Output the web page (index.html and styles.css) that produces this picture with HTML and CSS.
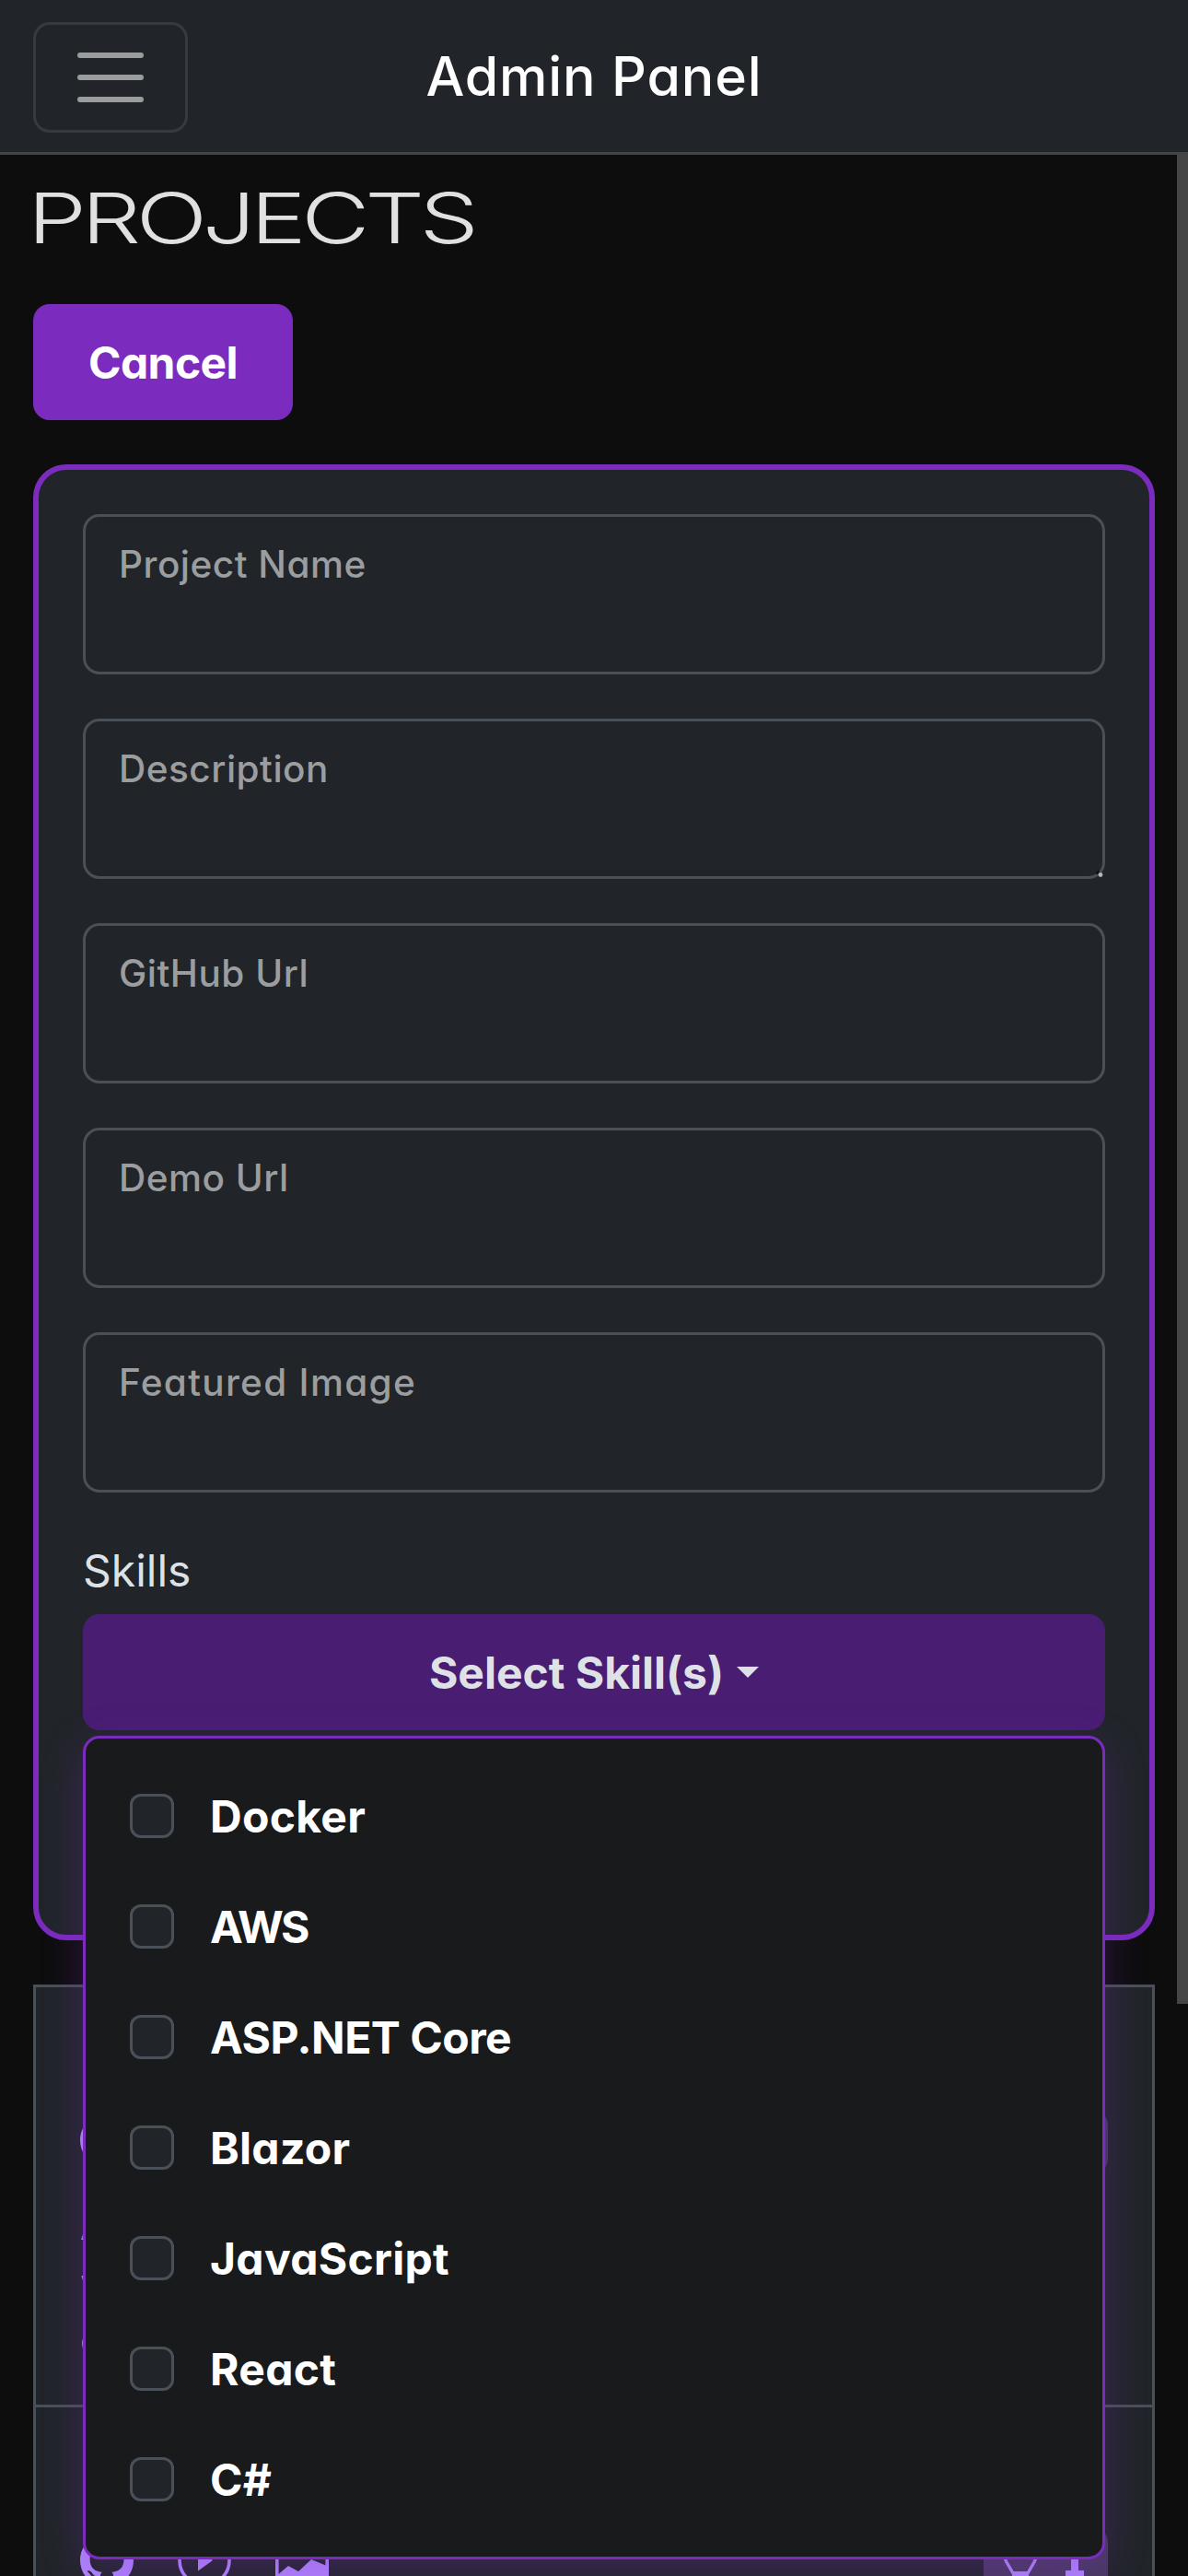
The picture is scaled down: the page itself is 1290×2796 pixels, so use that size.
FILE: index.html
```html
<!DOCTYPE html>
<html lang="en">
<head>
<meta charset="utf-8">
<title>Admin Panel</title>
<link rel="stylesheet" href="styles.css">
</head>
<body>
<header class="navbar">
  <button class="toggler" aria-label="Menu">
    <svg viewBox="0 0 30 30" width="90" height="90"><path d="M4 7h22M4 15h22M4 23h22" stroke="currentColor" stroke-width="2" stroke-linecap="round" fill="none"/></svg>
  </button>
  <h1 class="brand">Admin Panel</h1>
</header>
<div class="page">
<main class="content">
  <h2 class="heading">PROJECTS</h2>
  <button class="btn cancel">Cancel</button>
  <form class="card">
    <div class="field"><label>Project Name</label></div>
    <div class="field"><label>Description</label>
      <svg class="grip" viewBox="0 0 8 8" width="8" height="8"><path d="M0.5 4.5L3.5 1.5" stroke="#111" stroke-width="3"/><circle cx="5" cy="5.500" r="2.400" fill="#b4b6b9"/></svg>
    </div>
    <div class="field"><label>GitHub Url</label></div>
    <div class="field"><label>Demo Url</label></div>
    <div class="field wide"><label>Featured Image</label></div>
    <div class="skills-label">Skills</div>
    <div class="dropdown">
      <button type="button" class="btn select">Select Skill(s)<span class="caret"></span></button>
      <ul class="menu">
        <li><span class="check"></span>Docker</li>
        <li class="narrow"><span class="check"></span>AWS</li>
        <li class="normal"><span class="check"></span>ASP.NET Core</li>
        <li><span class="check"></span>Blazor</li>
        <li><span class="check"></span>JavaScript</li>
        <li><span class="check"></span>React</li>
        <li><span class="check"></span>C#</li>
      </ul>
    </div>
  </form>
  <section class="list">
    <article class="row">
      <div class="links">
        <svg viewBox="0 0 16 16" width="58" height="58"><use href="#github"/></svg>
      </div>
      <span class="badge first"></span>
      <p class="about"><span>A</span><span>w</span><span>c</span></p>
    </article>
    <article class="row">
      <div class="links">
        <svg viewBox="0 0 16 16" width="58" height="58"><path id="github" fill="currentColor" d="M8 0C3.58 0 0 3.58 0 8c0 3.54 2.29 6.53 5.47 7.59.4.07.55-.17.55-.38 0-.19-.01-.82-.01-1.49-2.01.37-2.53-.49-2.69-.94-.09-.23-.48-.94-.82-1.13-.28-.15-.68-.52-.01-.53.63-.01 1.08.58 1.23.82.72 1.21 1.87.87 2.33.66.07-.52.28-.87.51-1.07-1.78-.2-3.64-.89-3.64-3.95 0-.87.31-1.59.82-2.15-.08-.2-.36-1.02.08-2.12 0 0 .67-.21 2.2.82.64-.18 1.32-.27 2-.27s1.36.09 2 .27c1.53-1.04 2.2-.82 2.2-.82.44 1.1.16 1.92.08 2.12.51.56.82 1.27.82 2.15 0 3.07-1.87 3.75-3.65 3.95.29.25.54.73.54 1.48 0 1.07-.01 1.93-.01 2.2 0 .21.15.46.55.38A8.01 8.01 0 0 0 16 8c0-4.42-3.58-8-8-8z"/></svg>
        <svg viewBox="0 0 58 58" width="58" height="58"><circle cx="29" cy="29" r="27" fill="none" stroke="currentColor" stroke-width="3.6"/><path d="M22 17v23.500l16-11.500z" fill="currentColor"/></svg>
        <svg viewBox="0 0 58 58" width="58" height="58"><path d="M1.800 5h54.400v49H1.800z" fill="none" stroke="currentColor" stroke-width="3.600"/><path d="M1 46l13-11 11 6 14-13 17 7v19H1z" fill="currentColor"/></svg>
      </div>
      <span class="badge">
        <svg viewBox="0 0 44 58" width="44" height="58"><path d="M14 49l-7-12C-1 20 6 5 22 5s23 15 15 32l-7 12" fill="none" stroke="currentColor" stroke-width="3.400"/><path d="M13 47h18v8H13z" fill="currentColor"/></svg>
        <svg viewBox="0 0 20 58" width="20" height="58"><path d="M6 15h8v31h6v8H0v-8h6z" fill="currentColor"/></svg>
      </span>
    </article>
  </section>
</main>
<div class="scrollbar"></div>
</div>
</body>
</html>
```
FILE: styles.css
```css
* { box-sizing: border-box; margin: 0; padding: 0; }
html { background: #0d0d0d; }
body {
  height: 2796px;
  overflow: hidden;
  background: #0d0d0d;
  color: #dee2e6;
  font: 400 48px/72px Inter, "Open Sans", sans-serif;
  font-feature-settings: "cv11" 1;
}
button { font: inherit; font-feature-settings: inherit; border: 0; }
svg { display: block; }

.navbar {
  display: grid;
  grid-template-columns: 168px 1fr 168px;
  align-items: center;
  height: 168px;
  padding: 0 36px;
  background: #212529;
  border-bottom: 3px solid #454545;
}
.toggler {
  display: grid;
  place-items: center;
  width: 168px;
  height: 120px;
  margin-top: 3px;
  background: transparent;
  border: 3px solid #373a3e;
  border-radius: 18px;
  color: #9b9c9e;
}
.brand {
  color: #fff;
  font-size: 59px;
  font-weight: 500;
  text-align: center;
  letter-spacing: 0.9px;
}

.page { display: flex; height: 2628px; }
.scrollbar { width: 12px; height: 2007px; background: #454545; }
.content {
  display: flex;
  flex-direction: column;
  flex: 1;
  padding: 24px 24px 0 36px;
}
.heading {
  width: 360px;
  height: 90px;
  margin-left: -6px;
  color: #e0e0e0;
  font-size: 76px;
  font-weight: 360;
  line-height: 88px;
  letter-spacing: -4px;
  white-space: nowrap;
  transform: scaleX(1.34);
  transform-origin: left center;
}
.btn {
  display: flex;
  align-items: center;
  justify-content: center;
  height: 126px;
  padding-top: 1px;
  border-radius: 18px;
  font-weight: 700;
}
.cancel {
  width: 282px;
  margin-top: 48px;
  background: #7b2cbf;
  color: #fff;
  letter-spacing: -0.6px;
}

.card {
  height: 1602px;
  margin-top: 48px;
  padding: 48px;
  background: #212529;
  border: 6px solid #7b2cbf;
  border-radius: 36px;
}
.field {
  position: relative;
  height: 174px;
  margin-bottom: 48px;
  padding: 27px 36px;
  border: 3px solid #495057;
  border-radius: 18px;
  color: #9b9d9f;
  font-size: 40.5px;
  font-weight: 450;
  line-height: 50px;
  letter-spacing: 0.5px;
}
.field.wide { letter-spacing: 1.3px; }
.field label { display: block; }
.grip { position: absolute; right: -1px; bottom: -1px; }
.skills-label { height: 84px; padding-top: 1px; font-weight: 430; }

.dropdown { position: relative; }
.select { width: 100%; background: #481d72; color: #dee2e6; letter-spacing: 0; }
.caret {
  margin: -1px 0 0 14px;
  border: 12px solid transparent;
  border-top-color: #dee2e6;
  border-bottom: 0;
}
.menu {
  position: absolute;
  z-index: 2;
  top: 132px;
  left: 0;
  width: 100%;
  height: 894px;
  padding: 25px 48px;
  list-style: none;
  background: #191a1c;
  border: 3px solid #7b2cbf;
  border-radius: 18px;
  box-shadow: 0 12px 45px rgba(123, 44, 191, 0.3);
}
.menu li {
  display: flex;
  align-items: center;
  gap: 39px;
  height: 120px;
  color: #fff;
  font-weight: 700;
  letter-spacing: 0.3px;
}
.menu .narrow { letter-spacing: -2.4px; }
.menu .normal { letter-spacing: -0.5px; }
.check {
  width: 48px;
  height: 48px;
  margin-top: -2px;
  background: #212529;
  border: 3px solid #495057;
  border-radius: 12px;
}

.list {
  flex: 1;
  min-height: 0;
  margin-top: 48px;
  overflow: hidden;
  background: #212529;
  border: 3px solid #495057;
  border-bottom: 0;
}
.row {
  display: grid;
  grid-template-columns: 1fr auto;
  align-content: start;
  height: 456px;
  padding: 137px 48px 0;
  border-bottom: 3px solid #495057;
}
.links { display: flex; gap: 48px; color: #b185ff; }
.badge {
  display: flex;
  align-items: flex-start;
  justify-content: flex-end;
  gap: 27px;
  width: 135px;
  height: 78px;
  margin: -8px 0 0;
  padding: 2px 26px 0 0;
  border-radius: 18px;
  background: #483a60;
  color: #b185ff;
}
.badge.first { margin-top: -5px; height: 72px; }
.about {
  display: flex;
  flex-direction: column;
  margin-top: 24px;
  color: #a5a6a8;
  font-size: 42px;
  line-height: 62px;
}
```
